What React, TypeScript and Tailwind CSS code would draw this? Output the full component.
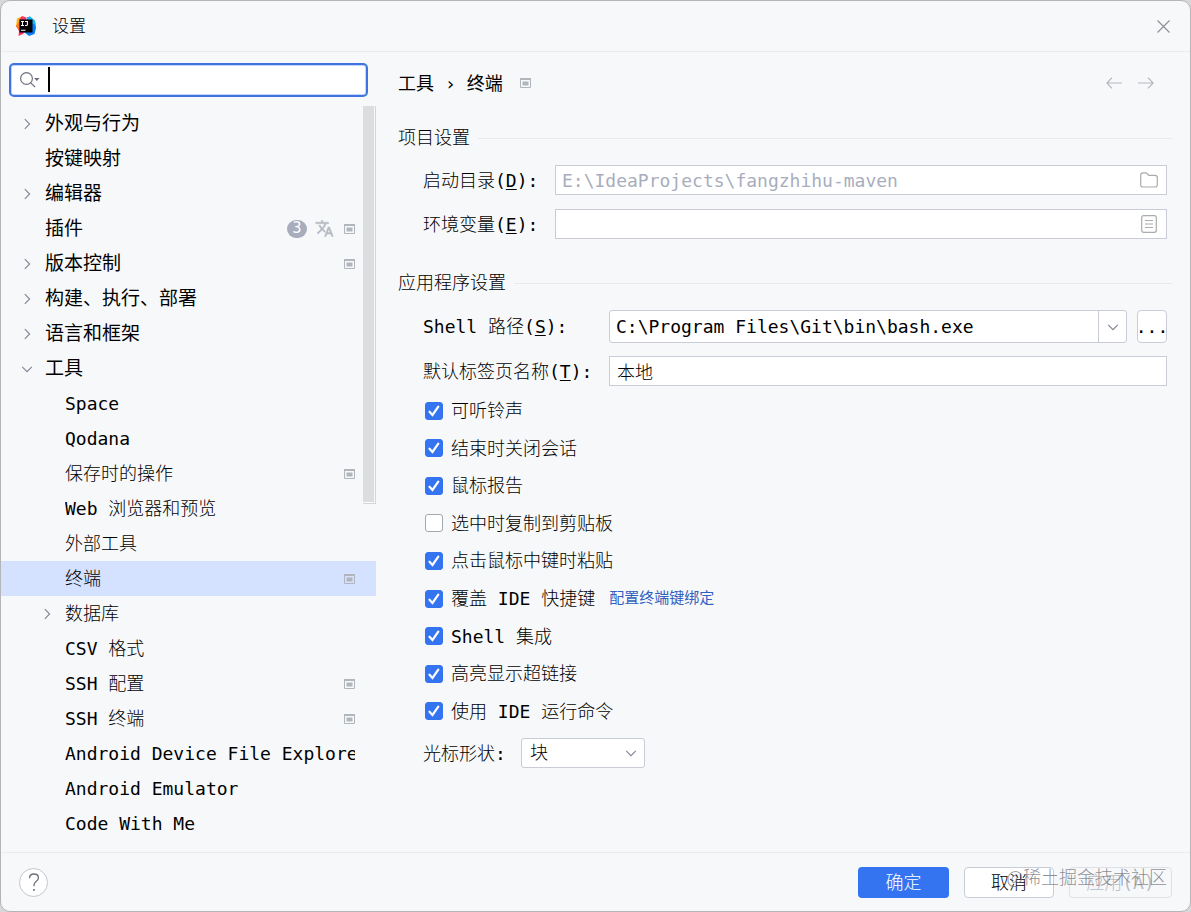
import React, { useState } from 'react';

interface TreeItem {
  label: string;
  level: number;
  arrow?: 'right' | 'down';
  project?: boolean;
  plugins?: boolean;
}

const treeItems: TreeItem[] = [
  { label: '外观与行为', level: 0, arrow: 'right' },
  { label: '按键映射', level: 0 },
  { label: '编辑器', level: 0, arrow: 'right' },
  { label: '插件', level: 0, project: true, plugins: true },
  { label: '版本控制', level: 0, arrow: 'right', project: true },
  { label: '构建、执行、部署', level: 0, arrow: 'right' },
  { label: '语言和框架', level: 0, arrow: 'right' },
  { label: '工具', level: 0, arrow: 'down' },
  { label: 'Space', level: 1 },
  { label: 'Qodana', level: 1 },
  { label: '保存时的操作', level: 1, project: true },
  { label: 'Web 浏览器和预览', level: 1 },
  { label: '外部工具', level: 1 },
  { label: '终端', level: 1, project: true },
  { label: '数据库', level: 1, arrow: 'right' },
  { label: 'CSV 格式', level: 1 },
  { label: 'SSH 配置', level: 1, project: true },
  { label: 'SSH 终端', level: 1, project: true },
  { label: 'Android Device File Explorer', level: 1 },
  { label: 'Android Emulator', level: 1 },
  { label: 'Code With Me', level: 1 },
];

const options = [
  { label: '可听铃声', checked: true },
  { label: '结束时关闭会话', checked: true },
  { label: '鼠标报告', checked: true },
  { label: '选中时复制到剪贴板', checked: false },
  { label: '点击鼠标中键时粘贴', checked: true },
  { label: '覆盖 IDE 快捷键', checked: true, link: '配置终端键绑定' },
  { label: 'Shell 集成', checked: true },
  { label: '高亮显示超链接', checked: true },
  { label: '使用 IDE 运行命令', checked: true },
];

const IdeaLogo = () => (
  <svg width="20" height="20" viewBox="0 0 20 20">
    <path d="M1 2.5 6.5.3 10 4 8 12 0 10.5Z" fill="#fdb60d" />
    <path d="M6 0 10.5 1.5 9 9 3 8 3.5 3Z" fill="#f0386b" />
    <path d="M11 1.5 14 .5 19 5 20 12 18.5 18 13 20 8 16Z" fill="#087cfa" />
    <path d="M11 1.5 14 .5 19 5 19.5 9 12 6Z" fill="#19b5f1" />
    <path d="M0 10 4 7 9 15 7 18 2.5 20 3 15Z" fill="#fe315d" />
    <path d="M0 10 3 6 4 15Z" fill="#fc801d" />
    <rect x="3.5" y="3.5" width="13" height="13" fill="#000" />
    <path d="M5 5.5h3M5 9.5h3M6.500 5.5v4M9 5.5h2.400v2.900q0 1.1-1.2 1.1H9M5 14.3h4.5" fill="none" stroke="#fff" strokeWidth="1.1" />
  </svg>
);

const ProjectIcon = () => (
  <svg width="11" height="10" viewBox="0 0 11 10" className="shrink-0 text-[#b1b6bd]">
    <path d="M.5 1h10v8.5H.5z" fill="none" stroke="currentColor" />
    <path d="M0 0h11v2H0zM2.5 3.5h6v4h-6z" fill="currentColor" />
  </svg>
);

const TranslateIcon = () => (
  <svg width="19" height="19" viewBox="0 0 24 24" fill="#b5bac1" stroke="#b5bac1" strokeWidth=".6" className="mr-2.5 shrink-0">
    <path d="M12.870 15.070l-2.540-2.510.03-.03c1.740-1.940 2.980-4.170 3.710-6.530H17V4h-7V2H8v2H1v1.990h11.170C11.500 7.920 10.440 9.750 9 11.350 8.070 10.320 7.300 9.190 6.690 8h-2c.73 1.630 1.730 3.170 2.980 4.560l-5.090 5.020L4 19l5-5 3.110 3.110.76-2.040zM18.500 10h-2L12 22h2l1.120-3h4.750L21 22h2l-4.500-12zm-2.620 7l1.620-4.330L19.120 17h-3.240z" />
  </svg>
);

const Chevron = ({ down }: { down?: boolean }) => (
  <svg width="12" height="12" viewBox="0 0 12 12" fill="none" stroke="#818594" strokeWidth="1.1">
    <path d={down ? 'M1.2 3.8 6 8.6l4.8-4.8' : 'M3.8 1.2 8.6 6l-4.8 4.8'} />
  </svg>
);

const Section = ({ title, children }: { title: string; children: React.ReactNode }) => (
  <section>
    <h2 className="flex items-center gap-2 leading-7">
      {title}
      <span className="h-px flex-1 bg-[#e8e9ec]" />
    </h2>
    <div className="pl-[25px] pr-[5px]">{children}</div>
  </section>
);

const Label = ({ htmlFor, text, hotkey }: { htmlFor: string; text: string; hotkey: string }) => (
  <label htmlFor={htmlFor} className="shrink-0 whitespace-pre">
    {text}(<span className="underline underline-offset-2">{hotkey}</span>):
  </label>
);

const App = () => {
  const [selected, setSelected] = useState('终端');
  const [search, setSearch] = useState('');
  const [checks, setChecks] = useState(options.map((o) => o.checked));

  const toggle = (index: number) => setChecks(checks.map((c, i) => (i === index ? !c : c)));

  return (
    <div className="bg-[#d8d8da]">
      <div className="flex min-h-screen flex-col rounded-[10px] border border-[#b4b5b7] bg-[#f7f8fa] font-['DejaVu_Sans_Mono','Noto_Sans_CJK_SC',monospace] text-[18px] font-light text-black">
        <header className="flex h-[51px] items-center border-b border-[#ebecf0] pl-[15px] pr-5">
          <IdeaLogo />
          <h1 className="ml-4 flex-1 pt-0.5 text-[17px]">设置</h1>
          <button aria-label="关闭">
            <svg width="13" height="13" viewBox="0 0 13 13" stroke="#8b8d92" strokeWidth="1.1">
              <path d="m.5.5 12 12M12.5.5l-12 12" />
            </svg>
          </button>
        </header>

        <div className="flex flex-1">
          <aside className="w-[375px] shrink-0 pt-[11px]">
            <div className="relative ml-2 mr-2 flex h-[34px] items-center rounded-[5px] border-2 border-[#3f74e0] bg-white pl-2 ring-1 ring-inset ring-[#c2d6fc]">
              <svg width="22" height="18" viewBox="0 0 22 18" fill="none" stroke="#6c707e" strokeWidth="1.2">
                <circle cx="7.5" cy="7.5" r="5.9" />
                <path d="m11.8 11.8 4.2 4.2" />
                <path d="M15 7h5.6l-2.8 3Z" fill="#6c707e" stroke="none" />
              </svg>
              <input
                aria-label="搜索设置"
                value={search}
                onChange={(e) => setSearch(e.target.value)}
                className="ml-2 h-full min-w-0 flex-1 bg-transparent caret-transparent outline-none"
              />
              {search === '' && <span className="pointer-events-none absolute left-[37px] top-0.5 h-[25px] w-0.5 bg-black" />}
            </div>

            <div className="relative mt-[9px]">
              <ul>
                {treeItems.map((item) => (
                  <li key={item.label}>
                    <button
                      onClick={() => setSelected(item.label)}
                      className={`flex h-[35px] w-full items-center pr-[21px] text-left ${item.level === 0 ? 'pl-5 text-[19px] font-normal' : 'pl-10'} ${selected === item.label ? 'bg-[#d4e2ff]' : ''}`}
                    >
                      <span className="mr-3 w-3 shrink-0">{item.arrow && <Chevron down={item.arrow === 'down'} />}</span>
                      <span className="min-w-0 flex-1 overflow-hidden whitespace-nowrap">{item.label}</span>
                      {item.plugins && (
                        <>
                          <span className="mr-2 flex h-[18px] w-5 items-center justify-center rounded-full bg-[#a8adbd] text-[15px] text-white">3</span>
                          <TranslateIcon />
                        </>
                      )}
                      {item.project && <ProjectIcon />}
                    </button>
                  </li>
                ))}
              </ul>
              <div className="absolute right-0 top-0 h-[398px] w-[13px] border-b border-r border-[#d5d6d8] bg-[#dcdddf] shadow-[inset_-1px_-1px_0_#f7f8fa]" />
            </div>
          </aside>

          <main className="min-w-0 flex-1 pb-4 pl-[22px] pr-[18px] pt-[15px]">
            <div className="flex h-8 items-center">
              <nav className="flex flex-1 items-center text-[18px] font-normal">
                <span>工具</span>
                <span className="mx-[11px]">›</span>
                <span className="mr-[17px]">终端</span>
                <ProjectIcon />
              </nav>
              <div className="flex gap-4 pr-[18px]">
                <button aria-label="后退">
                  <svg width="16" height="12" viewBox="0 0 16 12" fill="none" stroke="#b5b7bd" strokeWidth="1.2">
                    <path d="M16 6H1M6 .7.9 6 6 11.3" />
                  </svg>
                </button>
                <button aria-label="前进">
                  <svg width="16" height="12" viewBox="0 0 16 12" fill="none" stroke="#b5b7bd" strokeWidth="1.2">
                    <path d="M0 6h15M10 .7 15.1 6 10 11.3" />
                  </svg>
                </button>
              </div>
            </div>

            <div className="mt-[25px]">
              <Section title="项目设置">
                <div className="mt-[13px] grid grid-cols-[132px_1fr] items-center gap-y-[14px]">
                  <Label htmlFor="dir" text="启动目录" hotkey="D" />
                  <div className="flex h-[30px] items-center border border-[#c9ccd6] bg-white pl-1.5 pr-2">
                    <input id="dir" placeholder="E:\IdeaProjects\fangzhihu-maven" className="h-full min-w-0 flex-1 bg-transparent outline-none placeholder:text-[#a8adbd]" />
                    <button aria-label="浏览">
                      <svg width="18" height="16" viewBox="0 0 18 16" fill="none" stroke="#a9abb0" strokeWidth="1.2">
                        <path d="M.7 3.2Q.7.8 3 .8h3.2L8.8 3.3h6.3q2.2 0 2.2 2.2v7.3q0 2.2-2.2 2.2H3Q.7 15 .7 12.800Z" />
                      </svg>
                    </button>
                  </div>
                  <Label htmlFor="env" text="环境变量" hotkey="E" />
                  <div className="flex h-[30px] items-center border border-[#c9ccd6] bg-white pl-1.5 pr-[9px]">
                    <input id="env" className="h-full min-w-0 flex-1 bg-transparent outline-none" />
                    <button aria-label="编辑环境变量">
                      <svg width="16" height="18" viewBox="0 0 16 18" fill="none" stroke="#a9abb0" strokeWidth="1.2">
                        <rect x=".7" y=".7" width="14.600" height="16.600" rx="2" />
                        <path d="M4 5.500h8M4 9h8M4 12.500h8" />
                      </svg>
                    </button>
                  </div>
                </div>
              </Section>
            </div>

            <div className="mt-[30px]">
              <Section title="应用程序设置">
                <div className="mt-[13px] grid grid-cols-[186px_1fr] items-center gap-y-[13px]">
                  <Label htmlFor="shell" text="Shell 路径" hotkey="S" />
                  <div className="flex gap-2.5">
                    <div className="flex h-[33px] min-w-0 flex-1 rounded-[3px] border border-[#c9ccd6] bg-white">
                      <input id="shell" defaultValue="C:\Program Files\Git\bin\bash.exe" className="h-full min-w-0 flex-1 bg-transparent pl-1.5 outline-none" />
                      <button aria-label="选择 Shell" className="flex w-7 items-center justify-center border-l border-[#c9ccd6]">
                        <Chevron down />
                      </button>
                    </div>
                    <button aria-label="浏览 Shell" className="flex w-[30px] items-center justify-center rounded-[4px] border border-[#c9ccd6] bg-white">...</button>
                  </div>
                  <Label htmlFor="tab" text="默认标签页名称" hotkey="T" />
                  <input id="tab" defaultValue="本地" className="h-[30px] min-w-0 border border-[#c9ccd6] bg-white px-[7px] outline-none" />
                </div>

                <div className="mt-1.5 grid h-[338px] auto-rows-fr">
                  {options.map((option, i) => (
                    <div key={option.label} className="flex items-center">
                      <label className="flex items-center pl-0.5">
                        <span className="relative mr-2 h-[18px] w-[18px]">
                          <input
                            type="checkbox"
                            checked={checks[i]}
                            onChange={() => toggle(i)}
                            className="block h-[18px] w-[18px] appearance-none rounded-[3px] border border-[#a4a7af] bg-white checked:border-[#3574f0] checked:bg-[#3574f0]"
                          />
                          {checks[i] && (
                            <svg width="18" height="18" viewBox="0 0 18 18" className="pointer-events-none absolute inset-0" fill="none" stroke="#fff" strokeWidth="2.2" strokeLinecap="round">
                              <path d="m4.500 9.700 3 3.300 5.800-8.300" />
                            </svg>
                          )}
                        </span>
                        {option.label}
                      </label>
                      {option.link && <a href="#keymap" className="ml-3.5 text-[15px] font-normal text-[#315fbd]">{option.link}</a>}
                    </div>
                  ))}
                </div>

                <div className="mt-2 flex items-center">
                  <label htmlFor="cursor" className="w-[98px] shrink-0">光标形状:</label>
                  <div className="relative">
                    <select id="cursor" className="block h-[30px] w-[124px] appearance-none rounded-[3px] border border-[#c9ccd6] bg-white pl-2 leading-7 outline-none">
                      <option>块</option>
                      <option>下划线</option>
                      <option>垂直</option>
                    </select>
                    <span className="pointer-events-none absolute right-2 top-[9px]"><Chevron down /></span>
                  </div>
                </div>
              </Section>
            </div>
          </main>
        </div>

        <footer className="relative flex h-[59px] items-center gap-[15px] border-t border-[#ebecf0] pl-[18px] pr-[18px]">
          <button aria-label="帮助" className="mr-auto flex h-[29px] w-[29px] items-center justify-center rounded-full border border-[#c4c6cc] bg-white">
            <svg width="12" height="19" viewBox="0 0 12 19" fill="none" stroke="#6c707e" strokeWidth="1.300">
              <path d="M1.500 5.200q0-4.200 4.400-4.200 4.500 0 4.500 3.800 0 2.100-2.300 3.800Q6 10.200 6 12v1.300" />
              <circle cx="6" cy="17" r="1" fill="#6c707e" stroke="none" />
            </svg>
          </button>
          <button className="h-[31px] w-[91px] rounded-[4px] bg-[#3574f0] text-white">确定</button>
          <button className="h-[31px] w-[90px] rounded-[4px] border border-[#c9ccd6] bg-white">取消</button>
          <button disabled className="h-[31px] w-[103px] rounded-[4px] border border-[#dfe1e7] text-[#b9bcc6]">应用(A)</button>
          <span className="pointer-events-none absolute right-[23px] top-[9px] font-['Noto_Sans_CJK_SC',sans-serif] leading-7 text-[#6f7178]/80">@稀土掘金技术社区</span>
        </footer>
      </div>
    </div>
  );
};

export default App;
